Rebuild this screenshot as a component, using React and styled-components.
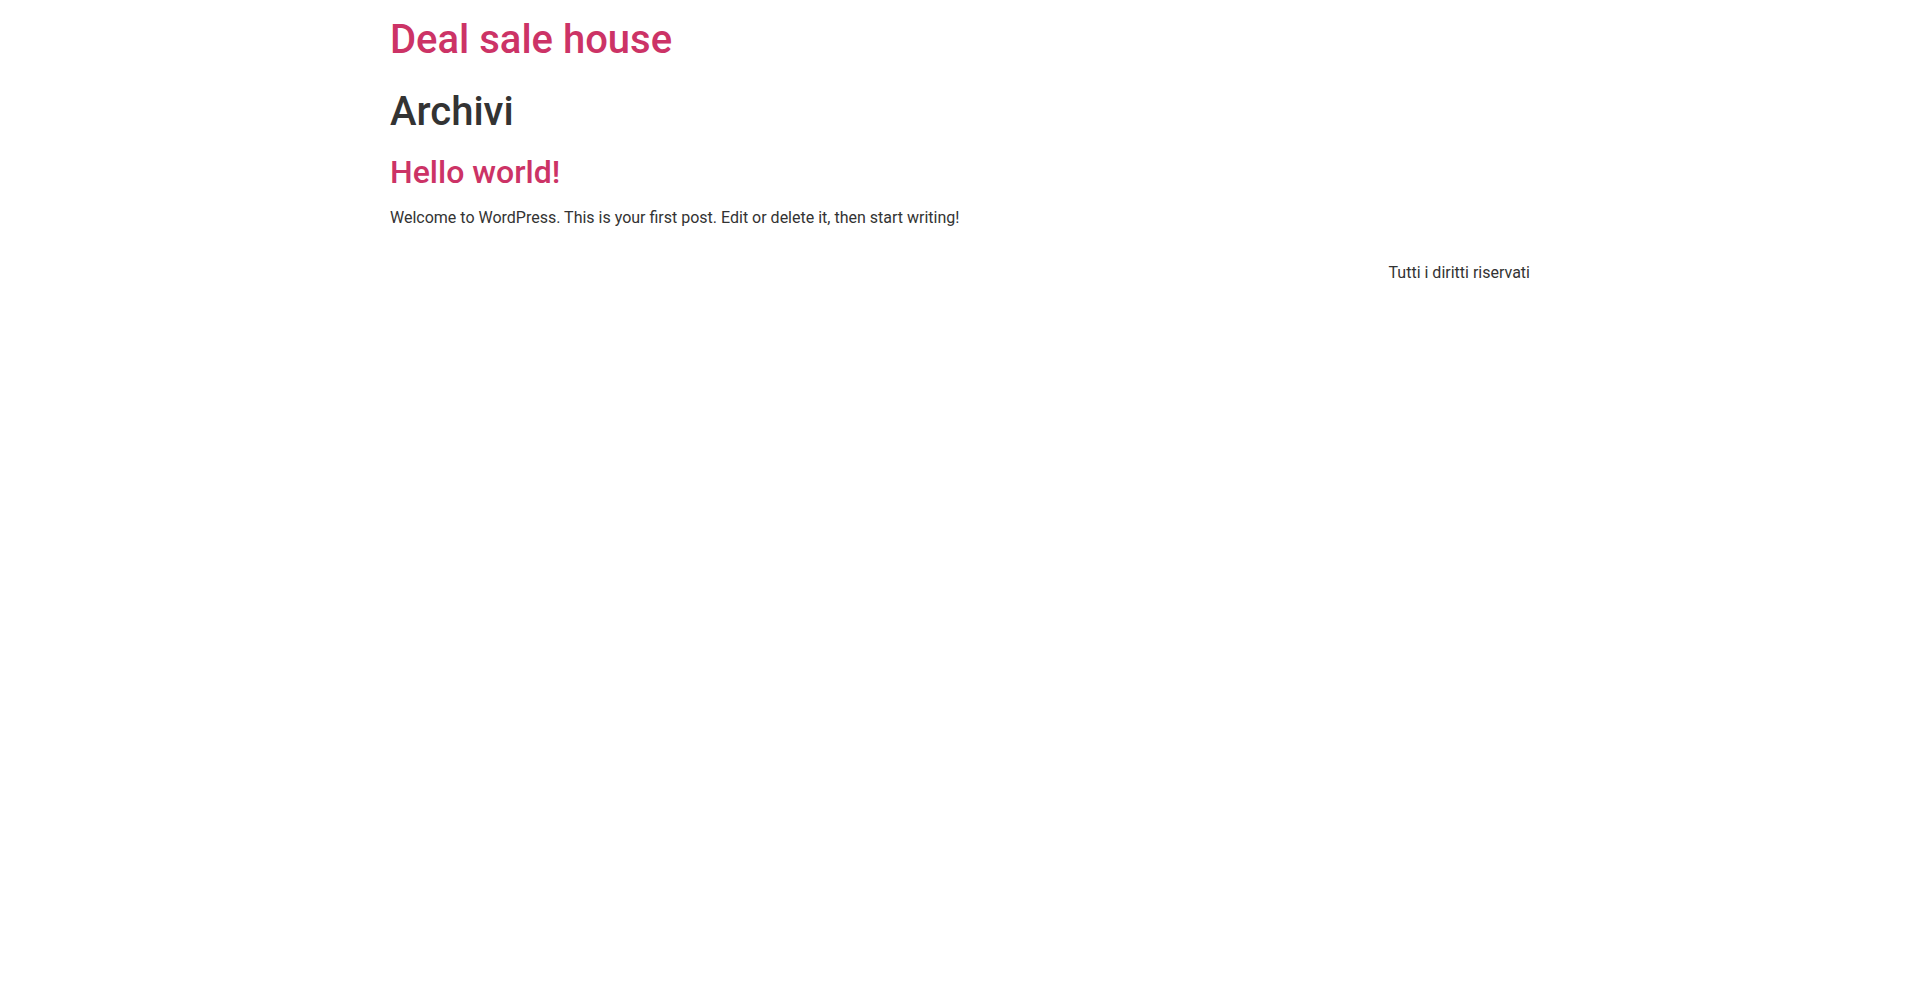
import React from "react"
import styled, { createGlobalStyle } from "styled-components"

const GlobalStyle = createGlobalStyle`
  html, body {
    margin: 0;
    background: #fff;
  }
  body {
    font-family: Roboto, "Liberation Sans", Arial, sans-serif;
    font-size: 16px;
    line-height: 1.5;
    color: #333;
  }
`

const Wrap = styled.div`
  max-width: 1140px;
  margin: 0 auto;
`

const Header = styled.header`
  padding: 16px 0 24px;
`

const SiteTitle = styled.h1`
  margin: 0;
  font-size: 40px;
  font-weight: 500;
  line-height: 1.2;

  a {
    color: #cc3366;
    text-decoration: none;
  }
`

const PageHeader = styled.div`
  margin-bottom: 17px;
`

const PageTitle = styled.h1`
  margin: 0;
  font-size: 40px;
  font-weight: 500;
  line-height: 1.2;
  color: #333;
`

const Article = styled.article``

const PostTitle = styled.h2`
  margin: 0 0 15px;
  font-size: 32px;
  font-weight: 500;
  line-height: 1.2;

  a {
    color: #cc3366;
    text-decoration: none;
  }
`

const Excerpt = styled.p`
  margin: 0;
`

const Footer = styled.footer`
  padding-top: 31px;
  display: flex;
  justify-content: flex-end;
`

const Copy = styled.p`
  margin: 0;
`

const App = () => {
  return (
    <>
      <GlobalStyle />
      <Wrap>
        <Header>
          <SiteTitle><a href="#">Deal sale house</a></SiteTitle>
        </Header>
        <main>
          <PageHeader>
            <PageTitle>Archivi</PageTitle>
          </PageHeader>
          <Article>
            <PostTitle><a href="#">Hello world!</a></PostTitle>
            <Excerpt>Welcome to WordPress. This is your first post. Edit or delete it, then start writing!</Excerpt>
          </Article>
        </main>
        <Footer>
          <Copy>Tutti i diritti riservati</Copy>
        </Footer>
      </Wrap>
    </>
  )
}

export default App
